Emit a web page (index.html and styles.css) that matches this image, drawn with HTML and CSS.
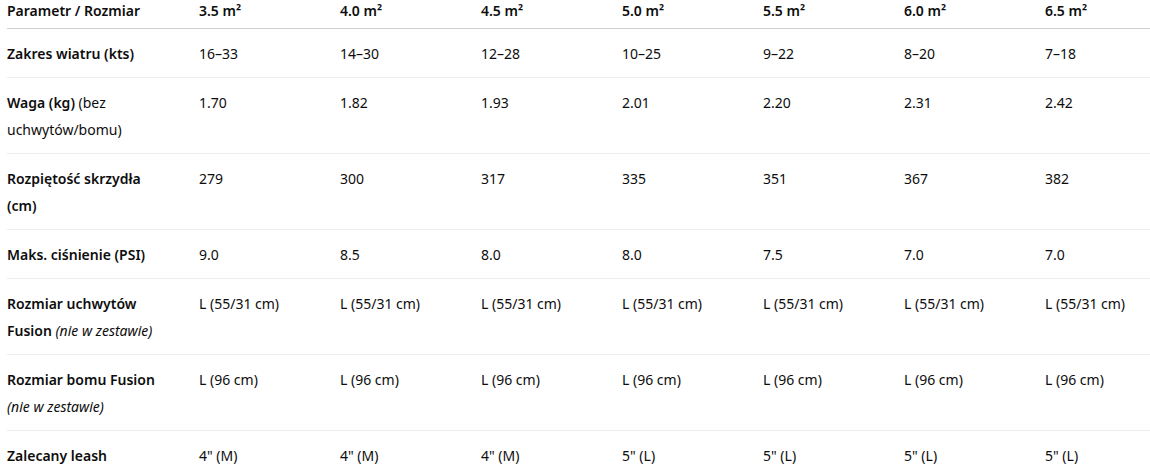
FILE: index.html
```html
<!DOCTYPE html>
<html>
<head>
  <meta charset="utf-8">
  <title>Specyfikacja skrzydła</title>
  <link rel="stylesheet" href="styles.css">
</head>
<body>
  <div class="wrap">
    <table class="specs">
      <colgroup>
        <col class="first">
        <col class="size"><col class="size"><col class="size"><col class="size"><col class="size"><col class="size">
        <col class="last">
      </colgroup>
      <thead>
        <tr>
          <th>Parametr / Rozmiar</th>
          <th>3.5 m²</th><th>4.0 m²</th><th>4.5 m²</th><th>5.0 m²</th><th>5.5 m²</th><th>6.0 m²</th><th>6.5 m²</th>
        </tr>
      </thead>
      <tbody>
        <tr>
          <td><b>Zakres wiatru (kts)</b></td>
          <td>16–33</td><td>14–30</td><td>12–28</td><td>10–25</td><td>9–22</td><td>8–20</td><td>7–18</td>
        </tr>
        <tr>
          <td><b>Waga (kg)</b> (bez uchwytów/bomu)</td>
          <td>1.70</td><td>1.82</td><td>1.93</td><td>2.01</td><td>2.20</td><td>2.31</td><td>2.42</td>
        </tr>
        <tr>
          <td><b>Rozpiętość skrzydła (cm)</b></td>
          <td>279</td><td>300</td><td>317</td><td>335</td><td>351</td><td>367</td><td>382</td>
        </tr>
        <tr>
          <td><b>Maks. ciśnienie (PSI)</b></td>
          <td>9.0</td><td>8.5</td><td>8.0</td><td>8.0</td><td>7.5</td><td>7.0</td><td>7.0</td>
        </tr>
        <tr>
          <td><b>Rozmiar uchwytów Fusion</b> <i>(nie w zestawie)</i></td>
          <td>L (55/31 cm)</td><td>L (55/31 cm)</td><td>L (55/31 cm)</td><td>L (55/31 cm)</td><td>L (55/31 cm)</td><td>L (55/31 cm)</td><td>L (55/31 cm)</td>
        </tr>
        <tr>
          <td><b>Rozmiar bomu Fusion</b> <i>(nie w zestawie)</i></td>
          <td>L (96 cm)</td><td>L (96 cm)</td><td>L (96 cm)</td><td>L (96 cm)</td><td>L (96 cm)</td><td>L (96 cm)</td><td>L (96 cm)</td>
        </tr>
        <tr>
          <td><b>Zalecany leash</b></td>
          <td>4" (M)</td><td>4" (M)</td><td>4" (M)</td><td>5" (L)</td><td>5" (L)</td><td>5" (L)</td><td>5" (L)</td>
        </tr>
      </tbody>
    </table>
  </div>
</body>
</html>
```

FILE: styles.css
```css
body {margin: 0;
      background-color: #ffffff;
      color: #0d0d0d;
      font-family: "Noto Sans", "Open Sans", sans-serif;
      font-size: 14px;
      overflow: hidden;}

.wrap {padding-left: 7px;}

.specs {width: 1143px;
        table-layout: fixed;
        border-collapse: collapse;}

.first {width: 192px;}
.size {width: 141px;}
.last {width: 105px;}

.specs th {text-align: left;
           font-weight: 600;
           line-height: 22px;
           padding: 0 16px 6px 0;
           border-bottom: 1px solid #cfcfcf;
           vertical-align: top;}

.specs td {line-height: 27px;
           padding: 11px 16px 10px 0;
           border-bottom: 1px solid #ececec;
           vertical-align: top;}

.specs td:first-child {padding-right: 30px;}

.specs tbody tr:last-child td {border-bottom: none;}

.specs b {font-weight: 600;}
.specs i {font-weight: 400;}
```
